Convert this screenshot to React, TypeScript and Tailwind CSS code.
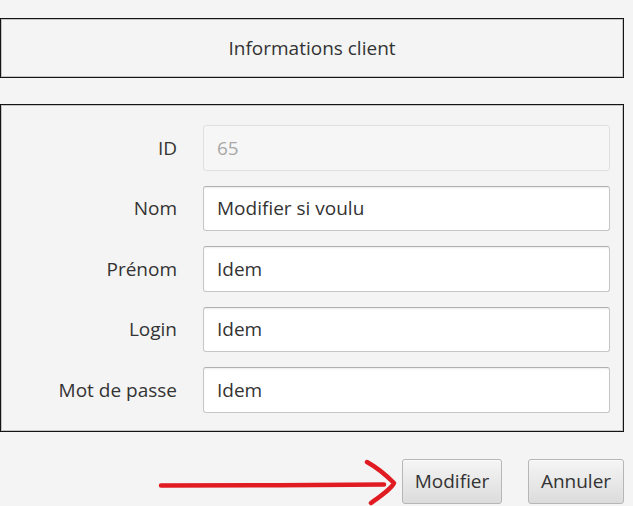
import React from 'react';

const fields = [
  { label: 'ID', value: '65', disabled: true },
  { label: 'Nom', value: 'Modifier si voulu' },
  { label: 'Prénom', value: 'Idem' },
  { label: 'Login', value: 'Idem' },
  { label: 'Mot de passe', value: 'Idem' },
];

const boxCls =
  'w-[624px] border-[1.5px] border-[#141414] shadow-[inset_0_0_0_1px_#c4c4c4] bg-[#f4f4f4]';

const btnCls =
  'h-[45px] rounded-[3px] border border-[#b6b6b6] bg-gradient-to-b from-[#f5f5f5] to-[#dcdcdc] text-[19px] text-[#333] shadow-[inset_0_1px_0_#fbfbfb]';

export default function App() {
  return (
    <div
      className="w-[633px] h-[506px] bg-[#f4f4f4] overflow-hidden flex flex-col text-[#333]"
      style={{ fontFamily: '"Open Sans", "Noto Sans", sans-serif' }}
    >
      {/* titre */}
      <div className={`${boxCls} mt-[18px] h-[60px] flex items-center justify-center text-[19px]`}>
        Informations client
      </div>

      {/* formulaire */}
      <div className={`${boxCls} mt-[26px] h-[328px] pt-[20px] pr-[13px] flex flex-col gap-[15px]`}>
        {fields.map((f) => (
          <div key={f.label} className="flex items-center h-[45.5px]">
            <label className="w-[176px] shrink-0 text-right text-[19px] pr-[0px]">{f.label}</label>
            <div
              className={
                f.disabled
                  ? 'ml-[26px] flex-1 h-full rounded-[3px] border border-[#e0e0e0] bg-[#f6f6f6] flex items-center pl-[13px] text-[19px] text-[#a8a8a8]'
                  : 'ml-[26px] flex-1 h-full rounded-[3px] border border-[#c6c6c6] border-t-[#b0b0b0] bg-white shadow-[inset_0_2px_2px_-1px_rgba(0,0,0,0.08)] flex items-center pl-[13px] text-[19px] text-[#333]'
              }
            >
              {f.value}
            </div>
          </div>
        ))}
      </div>

      {/* boutons */}
      <div className="relative mt-[27px] w-[624px] flex justify-end gap-[26px]">
        <svg
          className="absolute left-[156px] top-[-4px]"
          width="246"
          height="52"
          viewBox="0 0 246 52"
          fill="none"
        >
          <path
            d="M5 30.5 C 70 30.5, 160 30, 228 29.5"
            stroke="#e01b22"
            strokeWidth="4.5"
            strokeLinecap="round"
          />
          <path
            d="M211 7 C 220 12, 230 20, 238 28 C 236 33, 226 40, 215 48"
            stroke="#e01b22"
            strokeWidth="4.5"
            strokeLinecap="round"
            strokeLinejoin="round"
          />
        </svg>
        <button className={`${btnCls} w-[100px]`}>Modifier</button>
        <button className={`${btnCls} w-[96px]`}>Annuler</button>
      </div>
    </div>
  );
}
